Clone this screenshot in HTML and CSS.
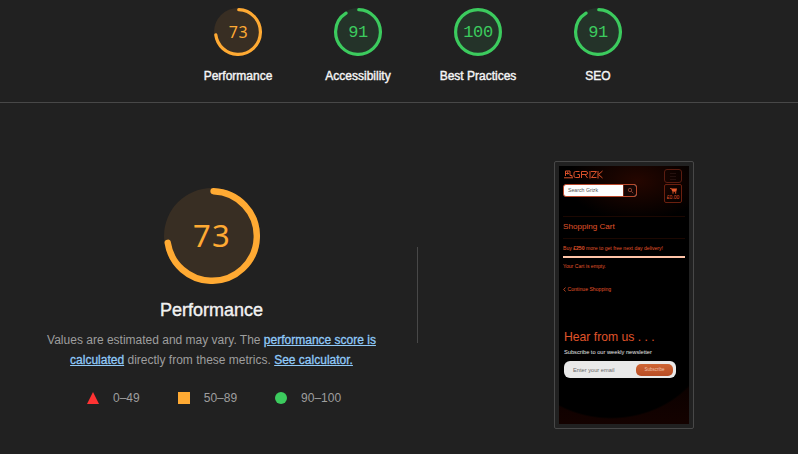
FILE: index.html
```html
<!DOCTYPE html>
<html lang="en">
<head>
<meta charset="utf-8">
<title>Performance report</title>
<link rel="stylesheet" href="styles.css">
</head>
<body>
<header class="scores">
  <a class="score average">
    <span class="gauge"><svg viewBox="0 0 120 120"><circle class="base" cx="60" cy="60" r="60"/><circle class="arc" cx="60" cy="60" r="56" pathLength="100" stroke-dasharray="72 100" transform="rotate(-88 60 60)"/></svg><span class="num humanist">73</span></span>
    <span class="label">Performance</span>
  </a>
  <a class="score pass">
    <span class="gauge"><svg viewBox="0 0 120 120"><circle class="base" cx="60" cy="60" r="60"/><circle class="arc" cx="60" cy="60" r="56" pathLength="100" stroke-dasharray="90 100" transform="rotate(-88 60 60)"/></svg><span class="num">91</span></span>
    <span class="label">Accessibility</span>
  </a>
  <a class="score pass">
    <span class="gauge"><svg viewBox="0 0 120 120"><circle class="base" cx="60" cy="60" r="60"/><circle class="arc" cx="60" cy="60" r="56"/></svg><span class="num">100</span></span>
    <span class="label">Best Practices</span>
  </a>
  <a class="score pass">
    <span class="gauge"><svg viewBox="0 0 120 120"><circle class="base" cx="60" cy="60" r="60"/><circle class="arc" cx="60" cy="60" r="56" pathLength="100" stroke-dasharray="90 100" transform="rotate(-88 60 60)"/></svg><span class="num">91</span></span>
    <span class="label">SEO</span>
  </a>
</header>
<main class="category">
  <section class="summary">
    <div class="gauge large average"><svg viewBox="0 0 120 120"><circle class="base" cx="60" cy="60" r="60"/><circle class="arc" cx="60" cy="60" r="56" pathLength="100" stroke-dasharray="72 100" transform="rotate(-88 60 60)"/></svg><span class="num humanist">73</span></div>
    <h1 class="title">Performance</h1>
    <p class="description">Values are estimated and may vary. The <a class="link">performance score is<br>calculated</a> directly from these metrics. <a class="link">See calculator.</a></p>
    <div class="legend">
      <span class="range"><svg class="mark" viewBox="0 0 12 12"><path d="M6 0 12 12H0z" fill="#ff3333"/></svg>0–49</span>
      <span class="range"><svg class="mark" viewBox="0 0 12 12"><path d="M0 0h12v12H0z" fill="#ffaa33"/></svg>50–89</span>
      <span class="range"><svg class="mark" viewBox="0 0 12 12"><circle cx="6" cy="6" r="6" fill="#3ccb5e"/></svg>90–100</span>
    </div>
  </section>
  <div class="divider"></div>
  <section class="preview">
    <div class="frame">
      <div class="phone">
        <div class="hero">
          <div class="brand">
            <svg class="logo" viewBox="0 0 40 9"><g fill="none" stroke="#d8502a" stroke-width="1"><path d="M2.500 6V1h4.500v4.500M3 3.500h3M4.700 1.500v3M1 7.800h9M7 5.500h2v2"/><path d="M16.500 1.500h-4q-1.500 0-1.500 1.500v3q0 1.500 1.500 1.500h4v-3h-2M18.500 8v-6.500h4.500q1.500 0 1.500 1.500t-1.500 1.500h-4M22 4.500 24.500 8M27 1v7.500M28 1.500h5.500L28.500 7.500h5M35 1v7.500M39.500 1 35.500 4.500 39.500 8"/></g></svg>
            <div class="search"><span class="search-text">Search Grizk</span><span class="search-button"><svg viewBox="0 0 7 7"><circle cx="3" cy="3" r="1.700"/><path d="m4.300 4.300 2 2"/></svg></span></div>
          </div>
          <div class="tools">
            <div class="menu"><i></i><i></i><i></i></div>
            <div class="basket"><svg viewBox="0 0 7 6"><path d="M0 .3h1.500l.3.300H7L6.300 3.700H2.400L1.200.9H0zM2.400 4.200h1.200v1.200H2.400zM5 4.200h1.200v1.200H5z" fill="#e85a2c"/></svg>£0.00</div>
          </div>
        </div>
        <div class="cart">
          <h2 class="cart-title">Shopping Cart</h2>
          <p class="offer">Buy <b>£250</b> more to get free next day delivery!</p>
          <p class="empty">Your Cart is empty.</p>
          <p class="continue"><svg class="chevron" viewBox="0 0 3 5"><path d="M2.500.5.700 2.500l1.800 2"/></svg> Continue Shopping</p>
        </div>
        <div class="news">
          <h2 class="news-title">Hear from us . . .</h2>
          <p class="news-text">Subscribe to our weekly newsletter</p>
          <div class="field"><span>Enter your email</span><span class="subscribe">Subscribe</span></div>
        </div>
      </div>
    </div>
  </section>
</main>
</body>
</html>
```
FILE: styles.css
```css
* { box-sizing: border-box; }
body { margin: 0; width: 798px; height: 454px; overflow: hidden; background: #212121; color: #f1f1f1; font-family: "Liberation Sans", Arial, sans-serif; }
h1, h2, p { margin: 0; font-weight: 400; }
.scores { display: flex; justify-content: center; height: 103px; padding: 8px 0 0 38px; border-bottom: 1px solid #484848; }
.score { display: flex; flex-direction: column; align-items: center; width: 120px; }
.label { margin-top: 12px; font-size: 12px; line-height: 16px; color: #f5f5f5; -webkit-text-stroke: .4px #f5f5f5; white-space: nowrap; }
.average { color: #ffaa33; --tint: #382e23; }
.pass { color: #3ccb5e; --tint: #243329; }
.gauge { display: grid; place-items: center; width: 48px; height: 48px; }
.gauge > * { grid-area: 1 / 1; }
.gauge svg { width: 100%; height: 100%; }
.base { fill: var(--tint); }
.arc { fill: none; stroke: currentColor; stroke-width: 8; stroke-linecap: round; }
.num { padding-top: 1px; font: 17px/18px "Liberation Mono", monospace; letter-spacing: -.4px; }
.num.humanist { padding: 0 0 1px 1px; font: 16px/18px "Noto Sans", sans-serif; letter-spacing: .7px; }
.gauge.large { width: 96px; height: 96px; margin: 0 auto; }
.large .num.humanist { font-size: 31px; line-height: 36px; letter-spacing: 1.200px; padding: 0 0 2px 1px; }
.category { display: flex; height: 351px; }
.summary { width: 417px; padding: 85px 0 0 6px; }
.title { margin-top: 15px; font-size: 18px; line-height: 22px; text-align: center; -webkit-text-stroke: .4px #f1f1f1; }
.description { margin-top: 9px; color: #9e9e9e; font-size: 12px; line-height: 20px; text-align: center; white-space: nowrap; }
.link { color: #90caf9; text-decoration: underline; -webkit-text-stroke: .3px #90caf9; }
.legend { display: flex; gap: 38px; margin: 20px 0 0 81px; color: #9e9e9e; font-size: 12px; line-height: 16px; }
.range { display: flex; align-items: center; }
.mark { width: 12px; height: 12px; margin-right: 14px; }
.divider { width: 1px; height: 96px; margin-top: 144px; background: #484848; }
.preview { padding: 58px 0 0 136px; }
.frame { width: 140px; height: 268px; padding: 4px; border: 1px solid #484848; border-radius: 2px; }
.phone { width: 130px; height: 258px; color: #e0542a; background: radial-gradient(ellipse 104px 93px at 52px 160px, #000 98%, transparent 100%), linear-gradient(#000 0 65%, #140200); }
.hero { display: flex; justify-content: space-between; height: 50px; padding: 3px 7px 0 4px; background: radial-gradient(ellipse 70px 40px at 60% 30%, #250600, #000); }
.logo { display: block; width: 40px; height: 9px; margin-top: 1px; }
.search { display: flex; width: 74px; height: 13px; margin-top: 5px; overflow: hidden; border: 1px solid #b9482b; border-radius: 3px; background: #fff; }
.search-text { flex: 1; padding-left: 4px; color: #555; font-size: 5.200px; line-height: 11px; }
.search-button { display: grid; place-items: center; width: 13px; background: #170604; border-left: 1px solid #702717; }
.search-button svg { width: 7px; height: 7px; fill: none; stroke: #aa5541; stroke-width: .7; }
.menu { display: flex; flex-direction: column; gap: 2px; width: 18px; height: 14px; padding: 3px 5px; border: 1px solid #5a1c10; border-radius: 3px; }
.menu i { height: 1px; background: #24110e; flex: none; }
.basket { display: flex; flex-direction: column; align-items: center; width: 18px; height: 19px; margin-top: 1px; padding-top: 3px; border: 1px solid #6b200f; border-radius: 2px; font-size: 5px; line-height: 7px; }
.basket svg { width: 7px; height: 6px; }
.cart { height: 110px; padding: 0 4px; }
.cart-title { height: 23px; padding-top: 4px; border: solid #1c0802; border-width: 1px 0; font-size: 8.100px; line-height: 11px; }
.offer { height: 19px; padding-top: 5px; border-bottom: 2px solid #ffc4a8; font-size: 5.100px; line-height: 8px; white-space: nowrap; }
.empty { padding-top: 4px; font-size: 5.100px; line-height: 8px; }
.continue { padding-top: 15px; font-size: 5.150px; line-height: 8px; }
.chevron { width: 3px; height: 5px; fill: none; stroke: currentColor; stroke-width: .8; vertical-align: -1px; }
.news { padding: 3px 5px; }
.news-title { font-size: 12.200px; line-height: 16px; }
.news-text { margin-top: 3px; color: #e5e5e5; font-size: 5.700px; line-height: 8px; white-space: nowrap; }
.field { display: flex; justify-content: space-between; align-items: center; width: 112px; height: 17px; margin-top: 5px; padding: 0 3px 0 9px; border-radius: 6px; background: #e9e9e9; color: #686868; font-size: 5.700px; }
.subscribe { width: 37px; height: 12px; border-radius: 5px; background: linear-gradient(#cf6534, #b84d25); color: #f0c5b0; font-size: 4.500px; line-height: 12px; text-align: center; }
```
